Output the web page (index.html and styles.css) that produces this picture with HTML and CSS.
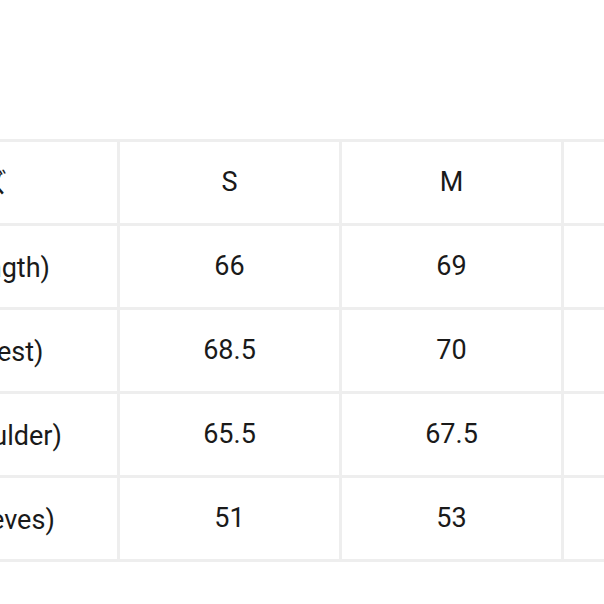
FILE: index.html
```html
<!DOCTYPE html>
<html lang="ja">
<head>
<meta charset="utf-8">
<link rel="stylesheet" href="styles.css">
</head>
<body>
<div class="sheet">
  <div class="cell label head">サイズ</div><div class="cell">S</div><div class="cell">M</div><div class="cell">L</div>
  <div class="cell label">着丈 (Length)</div><div class="cell">66</div><div class="cell">69</div><div class="cell">72</div>
  <div class="cell label">身幅 (Chest)</div><div class="cell">68.5</div><div class="cell">70</div><div class="cell">72</div>
  <div class="cell label">肩幅 (Shoulder)</div><div class="cell">65.5</div><div class="cell">67.5</div><div class="cell">69.5</div>
  <div class="cell label">袖丈 (Sleeves)</div><div class="cell">51</div><div class="cell">53</div><div class="cell">55</div>
</div>
</body>
</html>
```
FILE: styles.css
```css
html, body {
  margin: 0;
  padding: 0;
  background: #fff;
  overflow: hidden;
  width: 604px;
  height: 604px;
}
.sheet {
  display: grid;
  grid-template-columns: 296px 219px 219px 219px;
  grid-auto-rows: 81px;
  gap: 3px;
  padding: 3px;
  background: #eeeeee;
  width: max-content;
  margin-left: -182px;
  margin-top: 139px;
}
.cell {
  background: #fff;
  display: flex;
  align-items: center;
  justify-content: center;
  padding-bottom: 2px;
  box-sizing: border-box;
  font-family: Roboto, "Noto Sans CJK JP", sans-serif;
  font-size: 27px;
  color: #1a1a1a;
  white-space: nowrap;
}
.head {
  padding-right: 4px;
}
```
